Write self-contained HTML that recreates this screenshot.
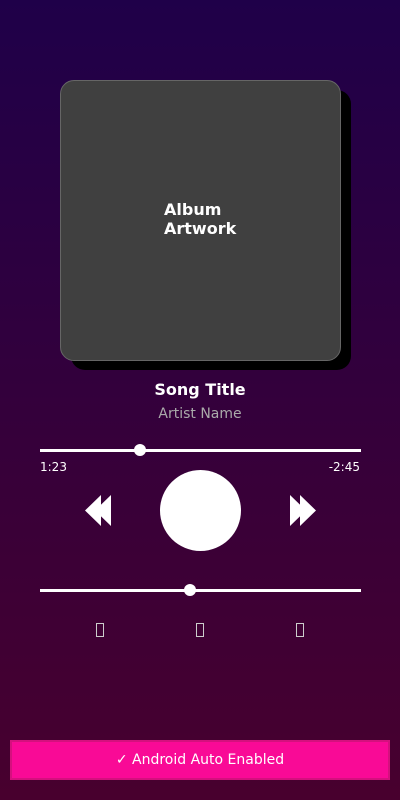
<!DOCTYPE html>
<html><head><meta charset="utf-8"><style>
html,body{margin:0;padding:0}
body{width:400px;height:800px;position:relative;overflow:hidden;background:linear-gradient(#1f0049,#48002e);font-family:"DejaVu Sans","Liberation Sans",sans-serif;color:#fff}
.abs{position:absolute}
.shadow{left:71px;top:90px;width:280px;height:280px;background:#000;border-radius:14px}
.art{left:60px;top:80px;width:279px;height:279px;background:#404040;border:1px solid #666;border-radius:14px}
.artt{left:164px;top:200px;font-weight:bold;font-size:16px;line-height:19px}
.track{left:40px;width:321px;height:3px;background:#fff}
.thumb{width:12px;height:12px;border-radius:50%;background:#fff}
.ico{width:8px;height:14px;border:1px solid #ccc;box-sizing:border-box}
</style></head><body>
<div class="abs shadow"></div>
<div class="abs art"></div>
<div class="abs artt">Album<br>Artwork</div>
<div class="abs" style="left:0;width:400px;top:380px;text-align:center;font-weight:bold;font-size:16px">Song Title</div>
<div class="abs" style="left:0;width:400px;top:406px;text-align:center;font-size:14px;color:#aaa">Artist Name</div>
<div class="abs track" style="top:449px"></div>
<div class="abs thumb" style="left:134px;top:444px"></div>
<div class="abs" style="left:40px;top:460px;font-size:12px">1:23</div>
<div class="abs" style="right:40px;top:460px;font-size:12px">-2:45</div>
<svg class="abs" style="left:0;top:0" width="400" height="800">
<polygon points="85,510.5 101,495 101,526" fill="#fff"/>
<polygon points="95,510.5 111,495 111,526" fill="#fff"/>
<polygon points="290,495 306,510.5 290,526" fill="#fff"/>
<polygon points="300,495 316,510.5 300,526" fill="#fff"/>
<circle cx="200.5" cy="510.5" r="40.5" fill="#fff"/>
</svg>
<div class="abs track" style="top:589px"></div>
<div class="abs thumb" style="left:184px;top:584px"></div>
<div class="abs ico" style="left:96px;top:623px"></div>
<div class="abs ico" style="left:196px;top:623px"></div>
<div class="abs ico" style="left:296px;top:623px"></div>
<div class="abs" style="left:10px;top:740px;width:380px;height:40px;box-sizing:border-box;background:#f90a96;border:2px solid #d5107e;text-align:center;line-height:37px;font-size:14px">✓ Android Auto Enabled</div>
</body></html>
